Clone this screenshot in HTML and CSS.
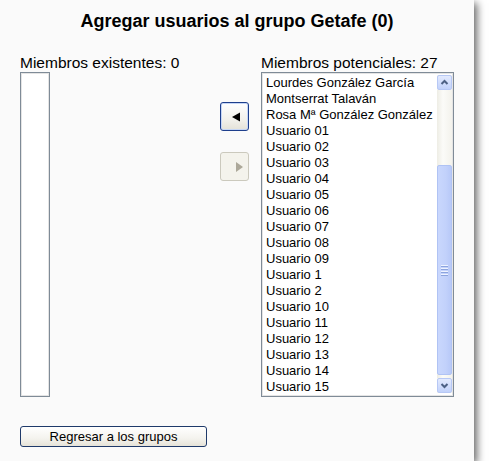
FILE: index.html
```html
<!DOCTYPE html>
<html lang="es">
<head>
<meta charset="utf-8">
<title>Agregar usuarios al grupo Getafe</title>
<link rel="stylesheet" href="styles.css">
</head>
<body>
<div class="panel">
  <h2 class="title">Agregar usuarios al grupo Getafe (0)</h2>
  <div class="columns">
    <div class="col col-left">
      <div class="label">Miembros existentes: 0</div>
      <div class="listbox listbox-small"></div>
    </div>
    <div class="col col-mid">
      <button class="arrow-btn" type="button" aria-label="Agregar">
        <svg width="29" height="29" viewBox="0 0 29 29"><polygon points="12,15 20,10.5 20,19.5" fill="#000"/></svg>
      </button>
      <button class="arrow-btn disabled" type="button" aria-label="Quitar">
        <svg width="29" height="29" viewBox="0 0 29 29"><polygon points="16,10 23,15 16,20" fill="#aca899"/></svg>
      </button>
    </div>
    <div class="col col-right">
      <div class="label">Miembros potenciales: 27</div>
      <div class="listbox listbox-big">
        <div class="items">
          <div class="item">Lourdes González García</div>
          <div class="item">Montserrat Talaván</div>
          <div class="item">Rosa Mª González González</div>
          <div class="item">Usuario 01</div>
          <div class="item">Usuario 02</div>
          <div class="item">Usuario 03</div>
          <div class="item">Usuario 04</div>
          <div class="item">Usuario 05</div>
          <div class="item">Usuario 06</div>
          <div class="item">Usuario 07</div>
          <div class="item">Usuario 08</div>
          <div class="item">Usuario 09</div>
          <div class="item">Usuario 1</div>
          <div class="item">Usuario 2</div>
          <div class="item">Usuario 10</div>
          <div class="item">Usuario 11</div>
          <div class="item">Usuario 12</div>
          <div class="item">Usuario 13</div>
          <div class="item">Usuario 14</div>
          <div class="item">Usuario 15</div>
        </div>
        <div class="scrollbar">
          <div class="sb-btn">
            <svg width="13" height="13" viewBox="0 0 13 13"><polyline points="3.5,8 6.5,5 9.5,8" fill="none" stroke="#4d6185" stroke-width="2"/></svg>
          </div>
          <div class="sb-track">
            <div class="sb-thumb">
              <div class="grip"><span></span><span></span><span></span><span></span></div>
            </div>
          </div>
          <div class="sb-btn">
            <svg width="13" height="13" viewBox="0 0 13 13"><polyline points="3.5,5 6.5,8 9.5,5" fill="none" stroke="#4d6185" stroke-width="2"/></svg>
          </div>
        </div>
      </div>
    </div>
  </div>
  <div class="footer">
    <button class="back-btn" type="button">Regresar a los grupos</button>
  </div>
</div>
</body>
</html>
```

FILE: styles.css
```css
html, body {
  margin: 0;
  padding: 0;
  background: #ffffff;
}

body {
  font-family: "Liberation Sans", Arial, sans-serif;
  color: #000;
}

.panel {
  width: 474px;
  height: 461px;
  box-sizing: border-box;
  background: #fafafa;
  box-shadow: 3px 3px 8px rgba(0, 0, 0, 0.6);
  padding: 10px 0 0 20px;
}

.title {
  margin: 0 0 0 -20px;
  font-size: 18px;
  line-height: 22px;
  font-weight: bold;
  text-align: center;
}

.columns {
  display: flex;
  margin-top: 22px;
}

.col {
  display: flex;
  flex-direction: column;
}

.col-left {
  width: 200px;
}

.col-mid {
  width: 41px;
  padding-top: 48px;
  gap: 21px;
}

.col-right {
  width: 193px;
}

.label {
  font-size: 15.5px;
  line-height: 17px;
  margin-bottom: 1px;
  white-space: nowrap;
}

.listbox {
  height: 325px;
  box-sizing: border-box;
  background: #fff;
  border: 1px solid #7f8b97;
  box-shadow: inset 0 0 0 1px #e4e4e4;
}

.listbox-small {
  width: 30px;
}

.listbox-big {
  width: 193px;
  display: flex;
}

.items {
  flex: 1;
  padding: 2px 0 0 4px;
  overflow: hidden;
}

.item {
  font-size: 13px;
  line-height: 16px;
  white-space: nowrap;
}

.scrollbar {
  width: 15px;
  margin: 2px 1px 3px 0;
  display: flex;
  flex-direction: column;
  background: #f5f4ee;
}

.sb-btn {
  width: 15px;
  height: 15px;
  box-sizing: border-box;
  border: 1px solid #b7c8f5;
  border-radius: 2px;
  background: linear-gradient(to bottom, #e3eafe, #c2d2fb);
  display: flex;
  align-items: center;
  justify-content: center;
}

.sb-btn svg {
  display: block;
}

.sb-track {
  flex: 1;
  background: linear-gradient(to right, #eeede5, #fbfbf8 40%, #f3f2ec);
}

.sb-thumb {
  margin-top: 75px;
  height: 210px;
  box-sizing: border-box;
  border: 1px solid #b0c3f4;
  border-radius: 2px;
  background: linear-gradient(to right, #c9d7fd, #c2d1fb 60%, #b8c9f8);
  display: flex;
  align-items: center;
  justify-content: center;
}

.grip {
  display: flex;
  flex-direction: column;
  gap: 1px;
}

.grip span {
  display: block;
  width: 7px;
  height: 1px;
  background: #eef3ff;
  border-bottom: 1px solid #8ca4de;
}

.arrow-btn {
  width: 29px;
  height: 29px;
  padding: 0;
  margin: 0;
  box-sizing: border-box;
  border: 1px solid #1e3f8c;
  border-radius: 3px;
  background: linear-gradient(to bottom, #ffffff, #f2f1ec 60%, #e4e2d8);
  box-shadow: inset 0 0 0 1px #c6d6f5;
  display: block;
}

.arrow-btn svg {
  display: block;
  margin: -1px;
}

.arrow-btn.disabled {
  border-color: #cbc9bd;
  background: #f4f3ec;
  box-shadow: none;
}

.footer {
  margin-top: 29px;
}

.back-btn {
  width: 187px;
  height: 21px;
  padding: 0;
  box-sizing: border-box;
  border: 1px solid #1f3a6a;
  border-radius: 3px;
  background: linear-gradient(to bottom, #ffffff, #f4f3ee 60%, #e6e3d8);
  font-family: "Liberation Sans", Arial, sans-serif;
  font-size: 13px;
  line-height: 19px;
  color: #000;
  text-align: center;
}
```
